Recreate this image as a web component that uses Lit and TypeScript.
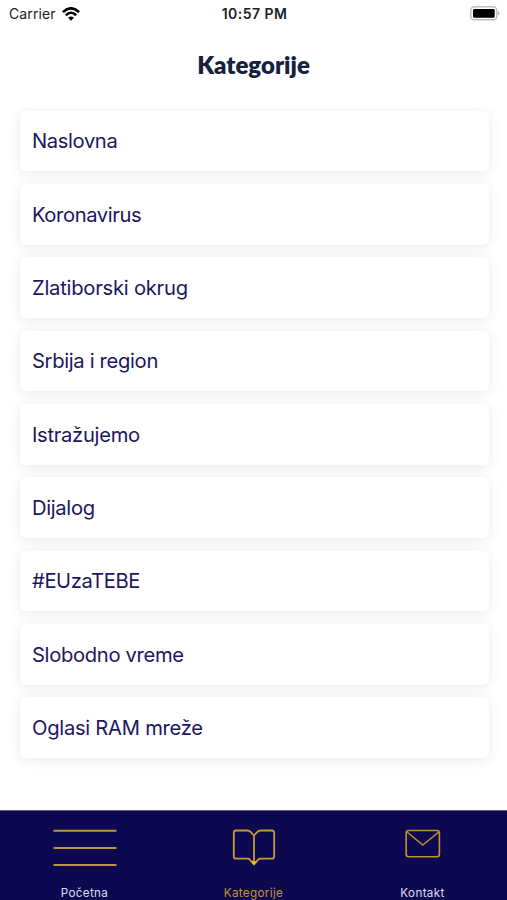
import { LitElement, html, css, svg } from "lit";
import { customElement } from "lit/decorators.js";
import { classMap } from "lit/directives/class-map.js";
import { styleMap } from "lit/directives/style-map.js";

const categories = [
  { label: "Naslovna", tracking: -0.38 },
  { label: "Koronavirus", tracking: -0.4 },
  { label: "Zlatiborski okrug", tracking: -0.24 },
  { label: "Srbija i region", tracking: -0.33 },
  { label: "Istražujemo", tracking: -0.3 },
  { label: "Dijalog", tracking: -0.33 },
  { label: "#EUzaTEBE", tracking: -0.4 },
  { label: "Slobodno vreme", tracking: -0.33 },
  { label: "Oglasi RAM mreže", tracking: -0.27 },
];

const menuIcon = svg`<svg width="64" height="40" viewBox="0 0 64 40" fill="none" stroke="#b8973f" stroke-width="2">
  <path d="M.5 2.7H63.5M.5 19.9H63.5M.5 37H63.5"/></svg>`;

const bookIcon = svg`<svg width="44" height="40" viewBox="0 0 44 40" fill="none" stroke="#c69b30" stroke-width="1.8" stroke-linejoin="round">
  <path d="M22 7.500L18.500 3.800Q17 2.500 15.500 2.500H4.200Q1.800 2.500 1.800 5V28.200Q1.800 30.700 4.200 30.700H15.500Q17 30.700 18 31.800L22 36.500L26 31.800Q27 30.700 28.500 30.700H39.800Q42.200 30.700 42.200 28.200V5Q42.200 2.500 39.800 2.500H28.500Q27 2.500 25.500 3.800L22 7.500V35"/>
  <path d="M19.800 33.500L22 36.500L24.200 33.500L22 34Z" fill="#f0c51c" stroke="#e8bd1e" stroke-width="1"/></svg>`;

const mailIcon = svg`<svg width="36" height="40" viewBox="0 0 36 40" fill="none" stroke="#bd922f" stroke-width="1.6" stroke-linejoin="round">
  <rect x="1.200" y="2.500" width="33.200" height="26.200" rx="2.500"/>
  <path d="M2 4L17.800 17L33.800 4"/></svg>`;

const tabs = [
  { label: "Početna", icon: menuIcon, active: false },
  { label: "Kategorije", icon: bookIcon, active: true },
  { label: "Kontakt", icon: mailIcon, active: false },
];

@customElement("app-status-bar")
export class AppStatusBar extends LitElement {
  static styles = css`
    :host {
      display: grid;
      grid-template-columns: 1fr auto 1fr;
      align-items: center;
      height: 28px;
      padding: 0 7px 0 9px;
      box-sizing: border-box;
      font-size: 14px;
      line-height: 28px;
      color: #222;
    }
    .carrier { display: flex; align-items: center; gap: 6px; letter-spacing: 0.1px; }
    .time { font-weight: 600; letter-spacing: 0.45px; }
    .battery { display: flex; justify-content: flex-end; }
    svg { display: block; }
    .wifi { margin-top: -1px; }
    .cell { margin-top: -1px; }
  `;
  render() {
    return html`
      <div class="carrier">
        <span>Carrier</span>
        <svg class="wifi" width="18" height="14" viewBox="0 0 18 14" fill="none" stroke="#000" stroke-width="2.600">
          <path d="M.9 5.100Q9-2.500 17.100 5.100M3.800 8.200Q9 3.300 14.200 8.200"/>
          <path d="M6.100 10.700Q9 8.100 11.900 10.700L9 13.700Z" fill="#000" stroke="none"/>
        </svg>
      </div>
      <div class="time">10:57 PM</div>
      <div class="battery">
        <svg class="cell" width="30" height="15" viewBox="0 0 30 15">
          <rect x=".8" y=".8" width="26" height="13" rx="3.600" fill="#fff" stroke="#bdbdbd" stroke-width="1.400"/>
          <rect x="3" y="3" width="21.700" height="8.700" rx="1.200" fill="#000"/>
          <path d="M28 5.200Q30.500 7.300 28 9.400Z" fill="#aaa"/>
        </svg>
      </div>
    `;
  }
}

@customElement("app-tab-bar")
export class AppTabBar extends LitElement {
  static styles = css`
    :host {
      display: grid;
      grid-template-columns: repeat(3, 1fr);
      height: 90px;
      box-sizing: border-box;
      background: #0d0950;
      border-top: 1px solid #5d5c85;
    }
    .tab {
      display: flex;
      flex-direction: column;
      align-items: center;
      padding-top: 17px;
      color: #dddcec;
      font-size: 11.700px;
      line-height: 16px;
      letter-spacing: 0.330px;
      white-space: nowrap;
    }
    .active { color: #c3922f; }
    .label { margin-top: 17px; }
    svg { display: block; }
  `;
  render() {
    return tabs.map(
      (t) => html`<div class=${classMap({ tab: true, active: t.active })}>
        ${t.icon}<span class="label">${t.label}</span>
      </div>`
    );
  }
}

@customElement("app-root")
export class AppRoot extends LitElement {
  static styles = css`
    :host {
      display: flex;
      flex-direction: column;
      height: 900px;
      overflow: hidden;
      background: #fff;
      font-family: Inter, "Liberation Sans", sans-serif;
    }
    .title {
      margin: 0;
      padding-top: 21px;
      height: 82.700px;
      box-sizing: border-box;
      text-align: center;
      font: 800 24px/32px Lato, sans-serif;
      color: #14213f;
    }
    .list {
      flex: 1;
      display: flex;
      flex-direction: column;
      gap: 12.850px;
      padding: 0 18.500px 0 20px;
    }
    .card {
      height: 60.500px;
      box-sizing: border-box;
      padding: 0 12px 0.300px;
      border-radius: 6px;
      background: #fff;
      box-shadow: 0 2px 14px rgba(0, 0, 0, 0.090);
      display: flex;
      align-items: center;
      font-size: 20.200px;
      color: #1c1760;
      position: relative;
    }
  `;
  render() {
    return html`
      <app-status-bar></app-status-bar>
      <h1 class="title">Kategorije</h1>
      <div class="list">
        ${categories.map(
          (c) => html`<div class="card">
            <span style=${styleMap({ letterSpacing: `${c.tracking}px` })}>${c.label}</span>
          </div>`
        )}
      </div>
      <app-tab-bar></app-tab-bar>
    `;
  }
}
